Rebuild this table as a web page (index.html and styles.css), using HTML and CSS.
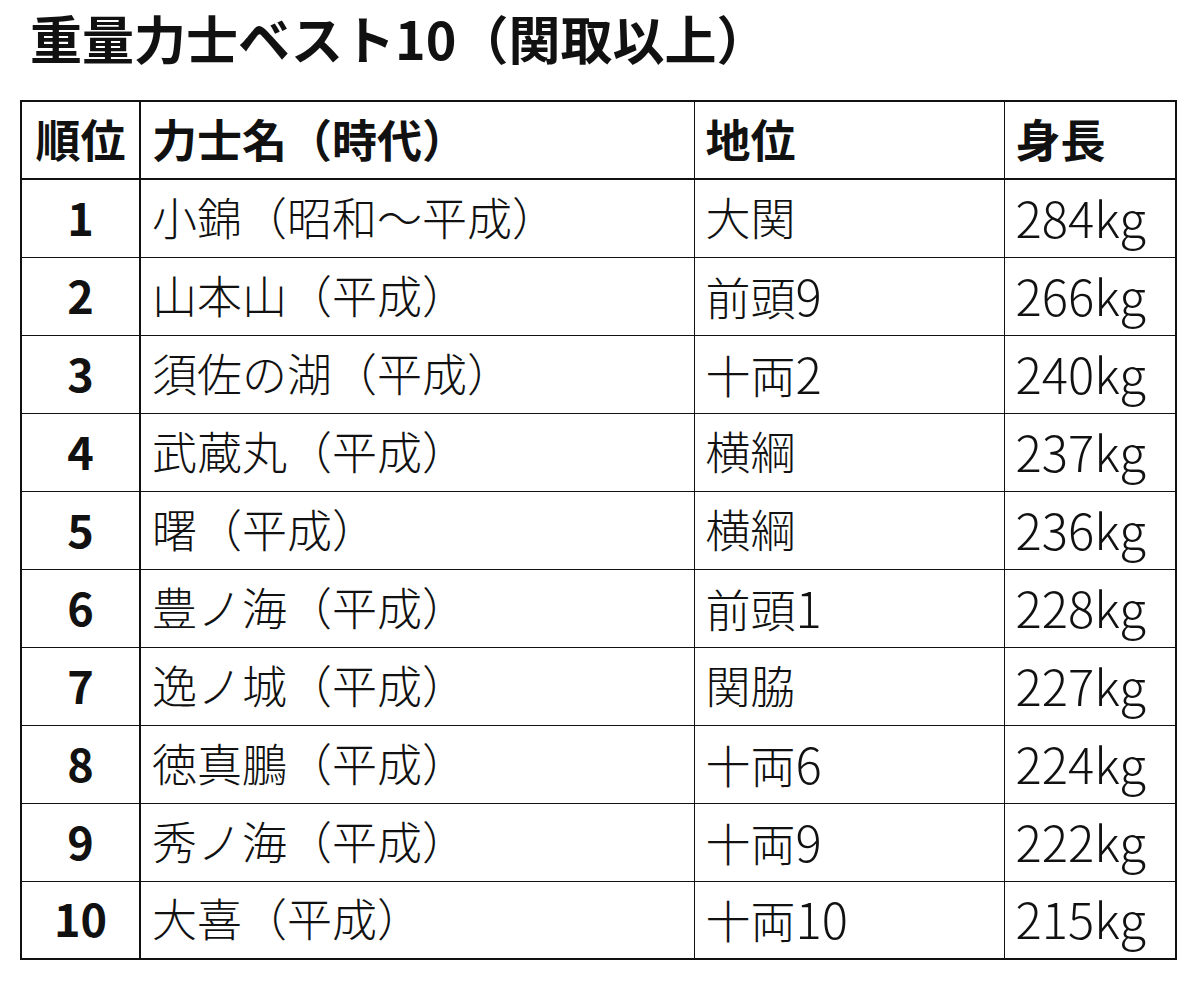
FILE: index.html
```html
<!DOCTYPE html>
<html lang="ja">
<head>
<meta charset="utf-8">
<title>重量力士ベスト10</title>
<link rel="stylesheet" href="styles.css">
</head>
<body>
<div class="page">
  <h1 class="title">重量力士ベスト10（関取以上）</h1>
  <table class="rank">
    <colgroup>
      <col class="c1"><col class="c2"><col class="c3"><col class="c4">
    </colgroup>
    <thead>
      <tr><th class="num-h">順位</th><th>力士名（時代）</th><th>地位</th><th>身長</th></tr>
    </thead>
    <tbody>
      <tr><td class="num">1</td><td>小錦（昭和～平成）</td><td>大関</td><td><span class="lat">284kg</span></td></tr>
      <tr><td class="num">2</td><td>山本山（平成）</td><td>前頭<span class="lat">9</span></td><td><span class="lat">266kg</span></td></tr>
      <tr><td class="num">3</td><td>須佐の湖（平成）</td><td>十両<span class="lat">2</span></td><td><span class="lat">240kg</span></td></tr>
      <tr><td class="num">4</td><td>武蔵丸（平成）</td><td>横綱</td><td><span class="lat">237kg</span></td></tr>
      <tr><td class="num">5</td><td>曙（平成）</td><td>横綱</td><td><span class="lat">236kg</span></td></tr>
      <tr><td class="num">6</td><td>豊ノ海（平成）</td><td>前頭<span class="lat">1</span></td><td><span class="lat">228kg</span></td></tr>
      <tr><td class="num">7</td><td>逸ノ城（平成）</td><td>関脇</td><td><span class="lat">227kg</span></td></tr>
      <tr><td class="num">8</td><td>徳真鵬（平成）</td><td>十両<span class="lat">6</span></td><td><span class="lat">224kg</span></td></tr>
      <tr><td class="num">9</td><td>秀ノ海（平成）</td><td>十両<span class="lat">9</span></td><td><span class="lat">222kg</span></td></tr>
      <tr><td class="num">10</td><td>大喜（平成）</td><td>十両<span class="lat">10</span></td><td><span class="lat">215kg</span></td></tr>
    </tbody>
  </table>
</div>
</body>
</html>
```

FILE: styles.css
```css
html, body {
  margin: 0;
  padding: 0;
  background: #ffffff;
}
body {
  font-family: "Noto Sans CJK JP", "Noto Sans", sans-serif;
  color: #111111;
}
.page {
  padding: 10px 20px 0 20px;
}
.title {
  margin: 0 0 0 10px;
  font-size: 52px;
  line-height: 56px;
  font-weight: 700;
  height: 90px;
}
.rank {
  border-collapse: collapse;
  width: 1155px;
  table-layout: fixed;
  border: 2px solid #111;
}
.c1 { width: 119px; }
.c2 { width: 554px; }
.c3 { width: 310px; }
.c4 { width: 172px; }
.rank tr {
  height: 78px;
}
.rank th, .rank td {
  border: 1px solid #111;
  padding: 0 0 4px 11px;
  text-align: left;
  vertical-align: middle;
  font-size: 45px;
  line-height: 1;
  white-space: nowrap;
}
.rank th {
  font-weight: 700;
}
.rank td {
  font-weight: 300;
}
.rank .lat {
  font-size: 49px;
  line-height: 1;
}
.rank thead th {
  border-bottom: 2px solid #111;
}
.rank .num-h {
  padding: 0 0 4px 0;
  text-align: center;
  border-right: 2px solid #111;
}
.rank .num {
  padding: 0 0 4px 0;
  text-align: center;
  font-weight: 700;
  border-right: 2px solid #111;
}
```
